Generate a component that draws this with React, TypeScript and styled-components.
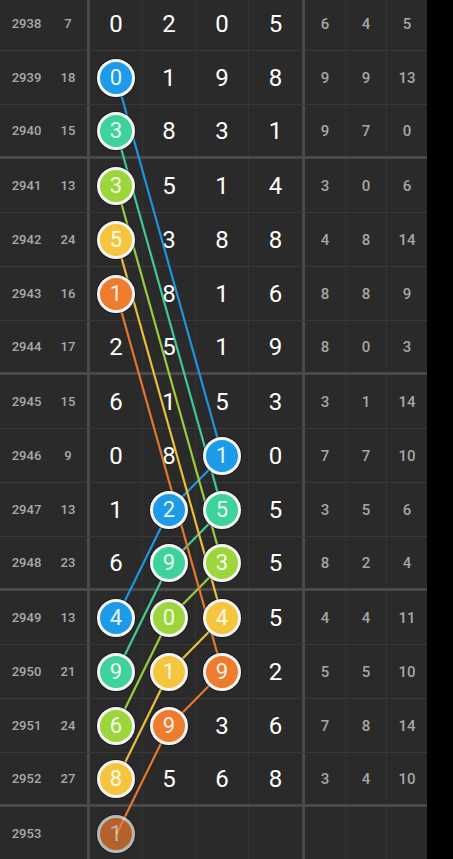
import { ReactElement } from "react";
import styled, { createGlobalStyle } from "styled-components";

const ISSUE_W = 49;
const SUM_W = 41;
const DIGIT_W = 53;
const STAT_W = 41;
const ROW_H = 54;
const DIGIT_START = ISSUE_W + SUM_W;

const COLORS: Record<string, string> = {
  blue: "#1d9ae8",
  teal: "#3ed39b",
  lime: "#9dd63b",
  yellow: "#f5c53d",
  orange: "#ef7b2c",
};

type Ball = { col: number; color: string; faded?: boolean };
type Row = {
  issue: number;
  sum?: number;
  digits: number[];
  stats: number[];
  balls: Ball[];
};

const rows: Row[] = [
  { issue: 2938, sum: 7, digits: [0, 2, 0, 5], stats: [6, 4, 5], balls: [] },
  { issue: 2939, sum: 18, digits: [0, 1, 9, 8], stats: [9, 9, 13], balls: [{ col: 0, color: "blue" }] },
  { issue: 2940, sum: 15, digits: [3, 8, 3, 1], stats: [9, 7, 0], balls: [{ col: 0, color: "teal" }] },
  { issue: 2941, sum: 13, digits: [3, 5, 1, 4], stats: [3, 0, 6], balls: [{ col: 0, color: "lime" }] },
  { issue: 2942, sum: 24, digits: [5, 3, 8, 8], stats: [4, 8, 14], balls: [{ col: 0, color: "yellow" }] },
  { issue: 2943, sum: 16, digits: [1, 8, 1, 6], stats: [8, 8, 9], balls: [{ col: 0, color: "orange" }] },
  { issue: 2944, sum: 17, digits: [2, 5, 1, 9], stats: [8, 0, 3], balls: [] },
  { issue: 2945, sum: 15, digits: [6, 1, 5, 3], stats: [3, 1, 14], balls: [] },
  { issue: 2946, sum: 9, digits: [0, 8, 1, 0], stats: [7, 7, 10], balls: [{ col: 2, color: "blue" }] },
  {
    issue: 2947, sum: 13, digits: [1, 2, 5, 5], stats: [3, 5, 6],
    balls: [{ col: 1, color: "blue" }, { col: 2, color: "teal" }],
  },
  {
    issue: 2948, sum: 23, digits: [6, 9, 3, 5], stats: [8, 2, 4],
    balls: [{ col: 1, color: "teal" }, { col: 2, color: "lime" }],
  },
  {
    issue: 2949, sum: 13, digits: [4, 0, 4, 5], stats: [4, 4, 11],
    balls: [{ col: 0, color: "blue" }, { col: 1, color: "lime" }, { col: 2, color: "yellow" }],
  },
  {
    issue: 2950, sum: 21, digits: [9, 1, 9, 2], stats: [5, 5, 10],
    balls: [{ col: 0, color: "teal" }, { col: 1, color: "yellow" }, { col: 2, color: "orange" }],
  },
  {
    issue: 2951, sum: 24, digits: [6, 9, 3, 6], stats: [7, 8, 14],
    balls: [{ col: 0, color: "lime" }, { col: 1, color: "orange" }],
  },
  { issue: 2952, sum: 27, digits: [8, 5, 6, 8], stats: [3, 4, 10], balls: [{ col: 0, color: "yellow" }] },
  { issue: 2953, digits: [1], stats: [], balls: [{ col: 0, color: "orange", faded: true }] },
];

const GlobalStyle = createGlobalStyle`
  html, body {
    margin: 0;
    padding: 0;
    background: #000;
  }
  body {
    font-family: Roboto, "Noto Sans", "Liberation Sans", sans-serif;
  }
`;

const Screen = styled.div`
  width: 453px;
  height: 859px;
  overflow: hidden;
  background: #000;
`;

const Table = styled.div`
  position: relative;
  display: flex;
  flex-direction: column;
  width: ${DIGIT_START + DIGIT_W * 4 + 3 + STAT_W * 3 - 1}px;
  margin-top: -3px;
  background: #2a2a2a;
  overflow: hidden;
`;

const TableRow = styled.div<{ $groupEnd: boolean }>`
  display: flex;
  flex-direction: row;
  height: ${ROW_H}px;
  box-sizing: border-box;
  border-bottom: ${p => (p.$groupEnd ? "3px solid #4a4a4a" : "1px solid #3a3a3a")};
`;

const IssueCell = styled.div`
  display: flex;
  align-items: center;
  justify-content: center;
  width: ${ISSUE_W}px;
  flex-shrink: 0;
  box-sizing: border-box;
  padding-left: 4px;
  color: #a9a9a9;
  font-size: 13px;
  font-weight: 500;
`;

const SumCell = styled.div`
  display: flex;
  align-items: center;
  justify-content: center;
  width: ${SUM_W}px;
  flex-shrink: 0;
  box-sizing: border-box;
  border-right: 3px solid #4a4a4a;
  color: #a9a9a9;
  font-size: 13px;
  font-weight: 500;
`;

const DigitCell = styled.div<{ $last: boolean }>`
  display: flex;
  align-items: center;
  justify-content: center;
  width: ${p => (p.$last ? DIGIT_W + 3 : DIGIT_W)}px;
  flex-shrink: 0;
  box-sizing: border-box;
  border-right: ${p => (p.$last ? "3px solid #4a4a4a" : "1px solid #333")};
  color: #fff;
  font-size: 24px;
  font-weight: 400;
`;

const StatCell = styled.div`
  display: flex;
  align-items: center;
  justify-content: center;
  width: ${STAT_W}px;
  flex-shrink: 0;
  box-sizing: border-box;
  border-right: 1px solid #333;
  color: #a6a6a6;
  font-size: 15px;
  font-weight: 500;
`;

const BallMark = styled.div<{ $color: string; $faded?: boolean }>`
  position: relative;
  z-index: 2;
  display: flex;
  align-items: center;
  justify-content: center;
  width: 38px;
  height: 38px;
  box-sizing: border-box;
  border-radius: 50%;
  border: 3px solid #f4f4f4;
  background: ${p => p.$color};
  color: rgba(255, 255, 255, 0.92);
  font-size: 22px;
  font-weight: 400;
  opacity: ${p => (p.$faded ? 0.7 : 1)};
  box-shadow: 0 0 0 1px rgba(0, 0, 0, 0.35);
`;

const Lines = styled.svg`
  position: absolute;
  left: 0;
  top: 0;
  z-index: 1;
  pointer-events: none;
`;

function cellCenter(rowIdx: number, col: number): [number, number] {
  return [DIGIT_START + DIGIT_W * col + DIGIT_W / 2, ROW_H * rowIdx + ROW_H / 2];
}

// each colour's balls, top to bottom, joined into one trail
function trails(): { color: string; points: [number, number][] }[] {
  const open: Record<string, [number, number][]> = {};
  rows.forEach((row, r) => {
    row.balls.forEach(b => {
      const pts = open[b.color] ?? [];
      pts.push(cellCenter(r, b.col));
      open[b.color] = pts;
    });
  });
  return Object.keys(open).map(color => ({ color, points: open[color] }));
}

function App(): ReactElement {
  const width = DIGIT_START + DIGIT_W * 4 + 3 + STAT_W * 3;
  const height = ROW_H * rows.length;

  return (
    <Screen>
      <GlobalStyle />
      <Table>
        <Lines width={width} height={height} viewBox={`0 0 ${width} ${height}`}>
          {trails().map(t => (
            <polyline
              key={t.color}
              points={t.points.map(p => p.join(",")).join(" ")}
              fill="none"
              stroke={COLORS[t.color]}
              strokeWidth={2.2}
              strokeOpacity={0.95}
            />
          ))}
        </Lines>
        {rows.map(row => (
          <TableRow key={row.issue} $groupEnd={(row.issue - 2936) % 4 === 0}>
            <IssueCell>{row.issue}</IssueCell>
            <SumCell>{row.sum ?? ""}</SumCell>
            {[0, 1, 2, 3].map(c => {
              const ball = row.balls.find(b => b.col === c);
              const value = row.digits[c];
              return (
                <DigitCell key={c} $last={c === 3}>
                  {ball ? (
                    <BallMark $color={COLORS[ball.color]} $faded={ball.faded}>
                      {value}
                    </BallMark>
                  ) : (
                    value ?? ""
                  )}
                </DigitCell>
              );
            })}
            {[0, 1, 2].map(c => (
              <StatCell key={c}>{row.stats[c] ?? ""}</StatCell>
            ))}
          </TableRow>
        ))}
      </Table>
    </Screen>
  );
}

export default App;
